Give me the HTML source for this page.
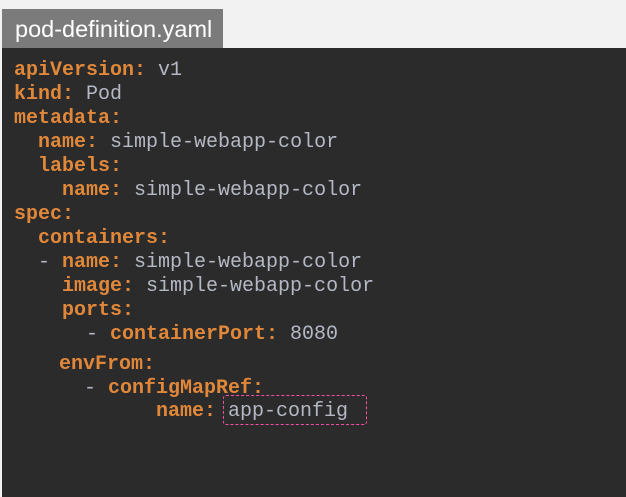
<!DOCTYPE html>
<html><head><style>
body{margin:0;width:626px;height:497px;background:#f2f2f2;position:relative;overflow:hidden}
.tab{position:absolute;left:2px;top:9px;width:221px;height:40px;background:#7b7b7b;color:#fff;font:23.5px "Liberation Sans",sans-serif;line-height:40px;padding-left:13px;box-sizing:border-box;white-space:nowrap}
.panel{position:absolute;left:2px;top:48px;width:624px;height:449px;background:#2b2b2b}
.l{position:absolute;font:20px "Liberation Mono",monospace;color:#b4b8c4;white-space:pre;line-height:24px}
.k{color:#e0873a;font-weight:bold}
.box{position:absolute;left:223px;top:395px;width:144px;height:30px;border:1.5px dashed #ff4fa8;box-sizing:border-box;border-radius:3px}
</style></head><body>
<div class="tab">pod-definition.yaml</div>
<div class="panel"></div>
<div class="l" style="left:14px;top:59px"><span class="k">apiVersion:</span> v1</div>
<div class="l" style="left:14px;top:83px"><span class="k">kind:</span> Pod</div>
<div class="l" style="left:14px;top:107px"><span class="k">metadata:</span></div>
<div class="l" style="left:14px;top:131px">  <span class="k">name:</span> simple-webapp-color</div>
<div class="l" style="left:14px;top:155px">  <span class="k">labels:</span></div>
<div class="l" style="left:14px;top:179px">    <span class="k">name:</span> simple-webapp-color</div>
<div class="l" style="left:14px;top:203px"><span class="k">spec:</span></div>
<div class="l" style="left:14px;top:227px">  <span class="k">containers:</span></div>
<div class="l" style="left:14px;top:251px">  - <span class="k">name:</span> simple-webapp-color</div>
<div class="l" style="left:14px;top:275px">    <span class="k">image:</span> simple-webapp-color</div>
<div class="l" style="left:14px;top:299px">    <span class="k">ports:</span></div>
<div class="l" style="left:14px;top:323px">      - <span class="k">containerPort:</span> 8080</div>
<div class="l" style="left:59px;top:353px"><span class="k">envFrom:</span></div>
<div class="l" style="left:84px;top:377px">- <span class="k">configMapRef:</span></div>
<div class="l" style="left:156px;top:400px"><span class="k">name:</span> app-config</div>
<div class="box"></div>
</body></html>
